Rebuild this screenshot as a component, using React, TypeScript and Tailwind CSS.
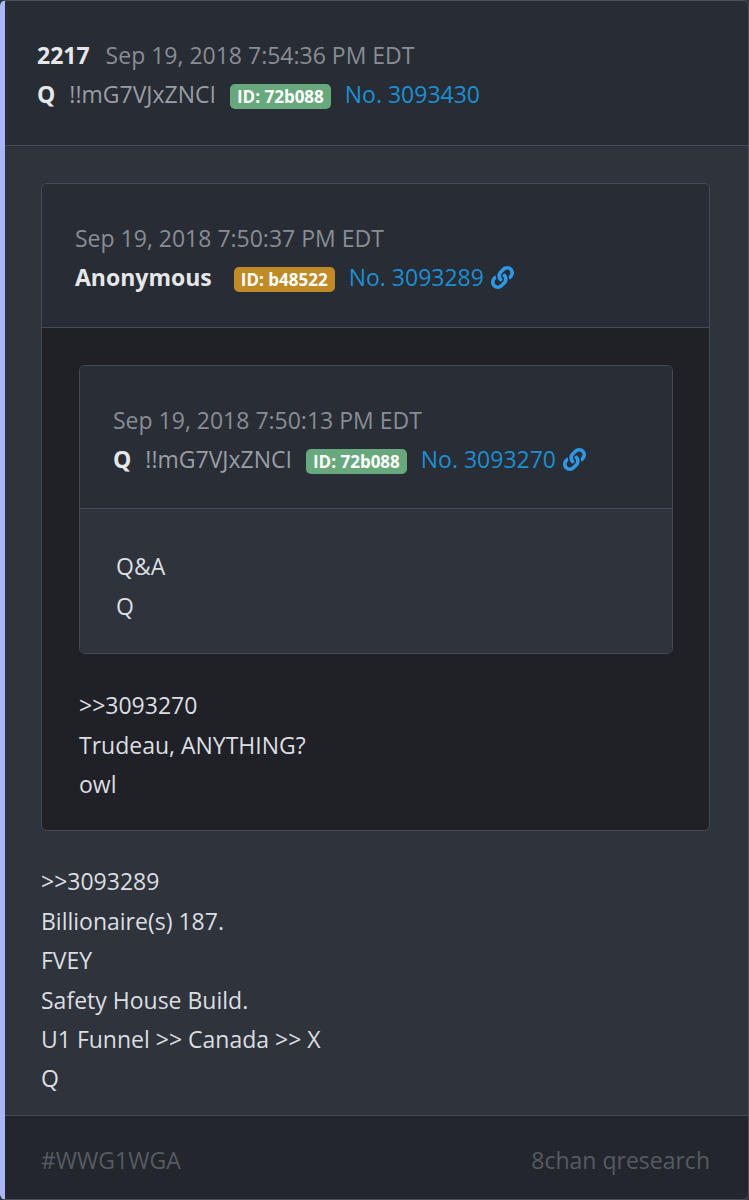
import React from "react";
import { FaLink } from "react-icons/fa";

const font = { fontFamily: '"Open Sans", "Noto Sans", sans-serif' };

function Badge({ id, color }: { id: string; color: string }) {
  return (
    <span
      className={`inline-flex items-center h-[25px] px-[7px] rounded-[5px] text-[17px] font-bold text-white leading-none ${color}`}
    >
      ID: {id}
    </span>
  );
}

function NameLine({
  name,
  trip,
  id,
  color,
  no,
  link,
  wide,
}: {
  name: string;
  trip?: string;
  id: string;
  color: string;
  no: string;
  link?: boolean;
  wide?: boolean;
}) {
  return (
    <div className="flex items-center h-[39.4px]">
      <span className="font-bold text-[#e6e7e9]">{name}</span>
      {trip && <span className="ml-[14px] text-[#999da4]">{trip}</span>}
      <span className={wide ? "ml-[22px]" : "ml-[14px]"}>
        <Badge id={id} color={color} />
      </span>
      <span className="ml-[14px] text-[#1b8fd2]">No. {no}</span>
      {link && <FaLink className="ml-[7px] text-[#2e98e4] w-[23px] h-[23px]" />}
    </div>
  );
}

export default function App() {
  return (
    <div className="w-[749px] h-[1200px] bg-[#2e333c]" style={font}>
      <div className="w-[749px] h-[1200px] flex flex-col border border-[#4a4f58] border-l-[5px] border-l-[#a9b7f6] rounded-[6px] overflow-hidden text-[23px] leading-[39.4px] text-[#dcdee1]">
        {/* Header */}
        <div className="bg-[#282c34] pl-[32px] pt-[35px] pb-[30px] border-b border-[#464c55]">
          <div className="flex items-center h-[39.4px]">
            <span className="font-bold text-[#e6e7e9]">2217</span>
            <span className="ml-[16px] text-[#888d95]">Sep 19, 2018 7:54:36 PM EDT</span>
          </div>
          <NameLine name="Q" trip="!!mG7VJxZNCI" id="72b088" color="bg-[#67a97d]" no="3093430" />
        </div>

        {/* Body */}
        <div className="flex-1 bg-[#2e333c] pl-[36px] pr-[38px] pt-[37px] pb-[16px]">
          {/* Card 1 */}
          <div className="border border-[#454b55] rounded-[6px] overflow-hidden">
            <div className="bg-[#282c34] px-[33px] pt-[35px] pb-[29px] border-b border-[#454b55]">
              <div className="h-[39.4px] flex items-center text-[#888d95]">Sep 19, 2018 7:50:37 PM EDT</div>
              <NameLine name="Anonymous" id="b48522" color="bg-[#c08b27]" no="3093289" link wide />
            </div>
            <div className="bg-[#1f2127] pl-[37px] pr-[36px] pt-[37px] pb-[26px]">
              {/* Card 2 */}
              <div className="border border-[#454b55] rounded-[6px] overflow-hidden">
                <div className="bg-[#292d35] px-[33px] pt-[35px] pb-[29px] border-b border-[#454b55]">
                  <div className="h-[39.4px] flex items-center text-[#888d95]">Sep 19, 2018 7:50:13 PM EDT</div>
                  <NameLine name="Q" trip="!!mG7VJxZNCI" id="72b088" color="bg-[#67a97d]" no="3093270" link />
                </div>
                <div className="bg-[#2e333c] px-[36px] pt-[38px] pb-[27px]">
                  <div>Q&amp;A</div>
                  <div>Q</div>
                </div>
              </div>
              <div className="pt-[32px]">
                <div>&gt;&gt;3093270</div>
                <div>Trudeau, ANYTHING?</div>
                <div>owl</div>
              </div>
            </div>
          </div>
          <div className="pt-[31px]">
            <div>&gt;&gt;3093289</div>
            <div>Billionaire(s) 187.</div>
            <div>FVEY</div>
            <div>Safety House Build.</div>
            <div>U1 Funnel &gt;&gt; Canada &gt;&gt; X</div>
            <div>Q</div>
          </div>
        </div>

        {/* Footer */}
        <div className="h-[85px] shrink-0 bg-[#23262d] border-t border-[#464c55] pl-[36px] pr-[38px] pt-[5px] flex items-center justify-between text-[#565b63]">
          <span>#WWG1WGA</span>
          <span>8chan qresearch</span>
        </div>
      </div>
    </div>
  );
}
